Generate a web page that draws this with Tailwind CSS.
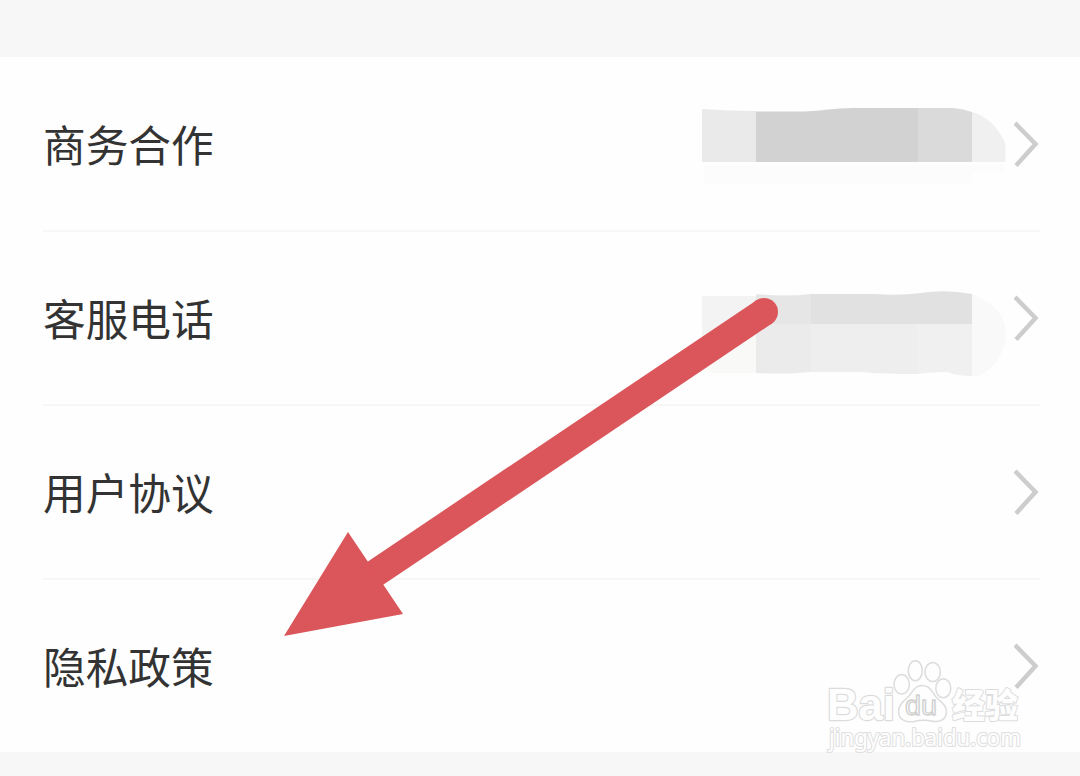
<!DOCTYPE html>
<html lang="zh-CN">
<head>
    <meta charset="UTF-8">
    <meta name="viewport" content="width=device-width, initial-scale=1.0">
    <title>隐私政策</title>
    <script src="https://cdn.jsdelivr.net/npm/@tailwindcss/browser@4"></script>
</head>
<body class="bg-[#f7f7f7] font-['Noto_Sans_CJK_SC',sans-serif] overflow-hidden">

    <div class="relative h-[776px] w-[1080px] overflow-hidden pt-[57px]">
        <!-- Settings list -->
        <ul class="bg-[#fefefe] pl-[43px] pr-10 text-[42.7px] leading-none text-[#333]">
            <li class="flex h-[175px] items-center justify-between border-b-2 border-[#f7f7f7]">
                <span class="pb-px">商务合作</span>
                <div class="flex items-center gap-2">
                    <svg class="h-20 w-[304px]" viewBox="702 104 304 80">
                        <path fill="#eaeaea" d="M702 109 Q728 111 756 111 V162 H702Z"/>
                        <path fill="#d2d2d2" d="M756 111.500 H800 C825 111 832 108 856 108 H918 V162 H756Z"/>
                        <path fill="#dadada" d="M918 108 H953 Q964 109 972 112 V162 H918Z"/>
                        <path fill="#f0f0f0" d="M972 112 Q994 118 1005.500 144 V162 H972Z"/>
                        <path fill="#fcfcfc" d="M704 165H1004V172H972V184H704Z"/>
                    </svg>
                    <svg class="h-12 w-[26px]" viewBox="0 0 26 48" fill="none" stroke="#cdcdcd" stroke-width="4.500"><path d="M1 3 L21.500 24 L2 45.500"/></svg>
                </div>
            </li>
            <li class="flex h-[174px] items-center justify-between border-b-2 border-[#f7f7f7]">
                <span class="pb-px">客服电话</span>
                <div class="flex items-center gap-2">
                    <svg class="h-[120px] w-[304px]" viewBox="702 258 304 120">
                        <path fill="#f3f3f3" d="M702 296H756V325L702 360Z"/>
                        <path fill="#f9f9f8" d="M702 360L756 325V373H714L702 367Z"/>
                        <path fill="#e6e6e6" d="M756 294 Q785 297 811 294V324H756Z"/>
                        <path fill="#e1e1e1" d="M811 294H875Q899 296 921 293Q945 289 972 294V324H811Z"/>
                        <path fill="#ebebeb" d="M756 324H811V372Q784 375 756 373Z"/>
                        <path fill="#eee" d="M811 324H917V374Q880 374 863 372H811Z"/>
                        <path fill="#f0f0f0" d="M917 324H972V376Q957 376 947 372Q930 372 917 374Z"/>
                        <path fill="#f9f9f9" d="M972 294Q1006 307 1006 335Q1002 366 978 376H972Z"/>
                    </svg>
                    <svg class="h-12 w-[26px]" viewBox="0 0 26 48" fill="none" stroke="#cdcdcd" stroke-width="4.500"><path d="M1 3 L21.500 24 L2 45.500"/></svg>
                </div>
            </li>
            <li class="flex h-[174px] items-center justify-between border-b-2 border-[#f7f7f7]">
                <span class="pb-px">用户协议</span>
                <svg class="h-12 w-[26px]" viewBox="0 0 26 48" fill="none" stroke="#cdcdcd" stroke-width="4.500"><path d="M1 3 L21.500 24 L2 45.500"/></svg>
            </li>
            <li class="flex h-[172px] items-center justify-between">
                <span class="pb-px">隐私政策</span>
                <svg class="h-12 w-[26px]" viewBox="0 0 26 48" fill="none" stroke="#cdcdcd" stroke-width="4.500"><path d="M1 3 L21.500 24 L2 45.500"/></svg>
            </li>
        </ul>

        <!-- Watermark -->
        <svg class="absolute left-[820px] top-[650px] h-[120px] w-[220px]" viewBox="820 650 220 120" fill="#fefefe" stroke="#dcdcdc" stroke-width="1.500" stroke-linejoin="round">
            <text x="827" y="720" font-family="'Liberation Sans', sans-serif" font-weight="700" font-size="45" textLength="68" lengthAdjust="spacingAndGlyphs" stroke-width="2.400" paint-order="stroke">Bai</text>
            <ellipse cx="901.700" cy="684.300" rx="7.700" ry="9.700"/>
            <ellipse cx="915.300" cy="670.700" rx="7" ry="10"/>
            <ellipse cx="932.700" cy="672" rx="7.700" ry="9.500"/>
            <ellipse cx="943.300" cy="688.300" rx="7.500" ry="9.500"/>
            <path d="M922.500 685.500C930 685.500 932 692 936 697C941 702 947 706 946.500 712C946 720 940 722 934 721.500C927 720 920 720 914 721.500C905 723 898.500 719 898.500 711C898.500 704 905 700 909 696C913 691 915 685.500 922.500 685.500Z"/>
            <text x="905" y="715" font-family="'Liberation Sans', sans-serif" font-size="27" textLength="32" lengthAdjust="spacingAndGlyphs" stroke="#d0d0d0" stroke-width="1.300">du</text>
            <text x="952" y="718" font-family="'Noto Sans CJK SC', sans-serif" font-weight="900" font-size="34" textLength="66" lengthAdjust="spacingAndGlyphs" stroke-width="2" paint-order="stroke">经验</text>
            <text x="829" y="746" font-family="'Noto Sans', sans-serif" font-size="23" textLength="192" lengthAdjust="spacingAndGlyphs" stroke="#e0e0e0" stroke-width="2.200" paint-order="stroke">jingyan.baidu.com</text>
        </svg>

        <!-- Arrow pointing at the privacy policy row -->
        <svg class="absolute left-0 top-0 h-[776px] w-[1080px]" viewBox="0 0 1080 776" fill="#db565b">
            <path d="M284 636L348 532L403 614Z"/>
            <path d="M372 575.500L764 312" fill="none" stroke="#db565b" stroke-width="28"/>
            <circle cx="764" cy="312" r="14"/>
        </svg>
    </div>

</body>
</html>
